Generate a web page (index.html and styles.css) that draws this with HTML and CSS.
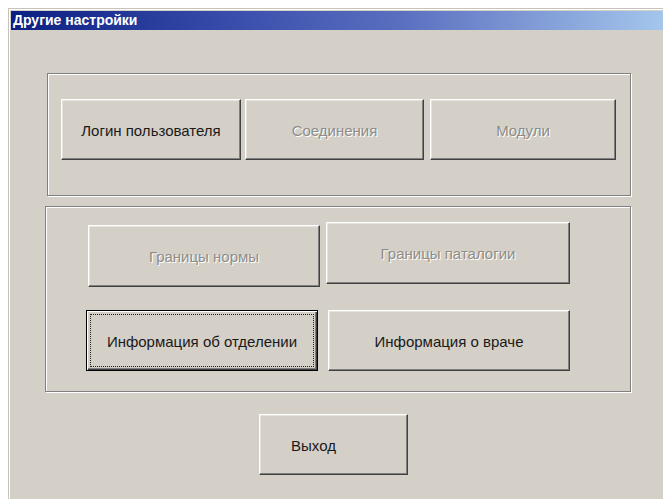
FILE: index.html
```html
<!DOCTYPE html>
<html lang="ru">
<head>
<meta charset="utf-8">
<title>Другие настройки</title>
<link rel="stylesheet" href="styles.css">
</head>
<body>
<div class="window">
  <div class="frame">
    <div class="titlebar">Другие настройки</div>
    <div class="client">
      <div class="group group-top">
        <div class="row">
          <button class="btn b-login">Логин пользователя</button>
          <button class="btn b-conn" disabled>Соединения</button>
          <button class="btn b-mod" disabled>Модули</button>
        </div>
      </div>
      <div class="group group-bottom">
        <div class="row row-limits">
          <button class="btn b-norm" disabled>Границы нормы</button>
          <button class="btn b-path" disabled>Границы паталогии</button>
        </div>
        <div class="row row-info">
          <button class="btn b-dept focus">Информация об отделении</button>
          <button class="btn b-doc">Информация о враче</button>
        </div>
      </div>
      <button class="btn b-exit">Выход</button>
    </div>
  </div>
</div>
</body>
</html>
```

FILE: styles.css
```css
html, body {
  margin: 0;
  padding: 0;
  background: #ffffff;
}

body {
  font-family: "Liberation Sans", Arial, sans-serif;
  overflow: hidden;
}

/* window chrome: light outer edge, white inner edge */
.window {
  margin: 8px 0 0 8px;
  border-top: 1px solid #c6c3bb;
  border-left: 1px solid #c6c3bb;
  height: 491px;
  box-sizing: border-box;
}

.frame {
  border-top: 1px solid #ffffff;
  border-left: 1px solid #ffffff;
  padding: 1px 0 0 1px;
  background: #d4d0c8;
  height: 100%;
  box-sizing: border-box;
}

.titlebar {
  height: 19px;
  line-height: 19px;
  padding-left: 2px;
  color: #ffffff;
  font-weight: bold;
  font-size: 14px;
  background: linear-gradient(to right, #0b1f82 0%, #3a4fac 35%, #5b6fc0 60%, #a4c6ec 100%);
  white-space: nowrap;
}

.client {
  display: flex;
  flex-direction: column;
  align-items: flex-start;
}

/* etched group frame */
.group {
  box-sizing: border-box;
  border: 1px solid #808080;
  box-shadow: inset 1px 1px 0 #ffffff, 1px 1px 0 #ffffff;
}

.group-top {
  margin: 43px 0 0 36px;
  width: 584px;
  height: 123px;
  padding: 25px 0 0 13px;
}

.group-bottom {
  margin: 10px 0 0 34px;
  width: 586px;
  height: 186px;
  padding: 15px 0 0 42px;
}

.row {
  display: flex;
  align-items: flex-start;
}

/* classic raised push button */
.btn {
  box-sizing: border-box;
  height: 61px;
  margin: 0;
  padding: 1px 0 0;
  font-family: "Liberation Sans", Arial, sans-serif;
  font-size: 15px;
  color: #1a1a1a;
  background: #d4d0c8;
  border: 1px solid;
  border-color: #ffffff #404040 #404040 #ffffff;
  box-shadow: inset -1px -1px 0 #808080, inset 1px 1px 0 #e6e3dd;
  border-radius: 0;
  white-space: nowrap;
}

.btn:disabled {
  color: #8e8c88;
  text-shadow: 1px 1px 0 #ffffff;
}

.btn.focus {
  border: 1px solid #000000;
  box-shadow: inset 1px 1px 0 #ffffff, inset -1px -1px 0 #404040, inset -2px -2px 0 #808080;
  outline: 1px dotted #202020;
  outline-offset: -5px;
}

.b-login { width: 180px; }
.b-conn { width: 179px; margin-left: 4px; }
.b-mod { width: 186px; margin-left: 6px; }

.b-norm { width: 232px; height: 62px; margin-top: 3px; }
.b-path { width: 244px; height: 62px; margin-left: 6px; }

.row-info { margin-top: 23px; }
.b-dept { width: 232px; margin-left: -2px; }
.b-doc { width: 242px; margin-left: 10px; }

.b-exit {
  width: 149px;
  margin: 22px 0 0 248px;
  padding-right: 40px;
}
```
